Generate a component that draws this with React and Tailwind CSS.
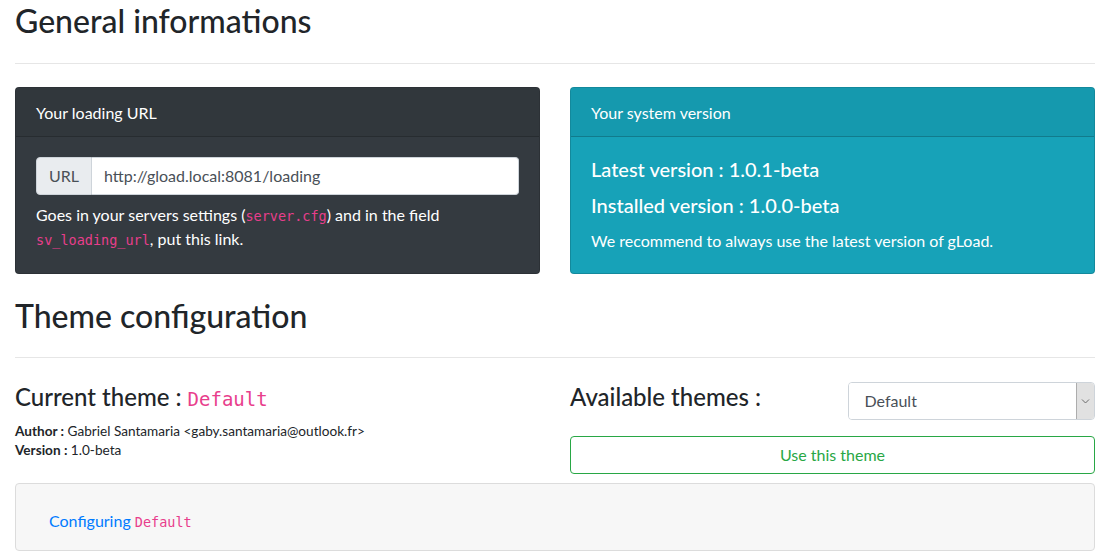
import React from 'react';

const code = "font-['DejaVu_Sans_Mono',monospace] text-[13.5px] text-[#e83e8c]";

const App = () => {
  return (
    <div className="w-[1110px] px-[15px] bg-white text-[#212529] font-['Lato',sans-serif] text-base leading-normal flex flex-col">
      {/* General informations */}
      <h2 className="text-[32px] leading-[38px] mt-[2px] font-medium">General informations</h2>
      <hr className="mt-[23px] border-t border-[#e6e6e6]" />

      <div className="grid grid-cols-2 gap-[30px] mt-[23px]">
        {/* Loading URL */}
        <div className="bg-[#343a40] text-white rounded border border-black/15 flex flex-col">
          <div className="px-5 pt-[13px] pb-[11px] bg-black/5 border-b border-black/20 rounded-t">Your loading URL</div>
          <div className="p-5">
            <div className="flex h-[38px] mb-2">
              <span className="flex items-center px-3 bg-[#e9ecef] text-[#495057] border border-[#ced4da] rounded-l">URL</span>
              <input
                type="text"
                readOnly
                value="http://gload.local:8081/loading"
                className="flex-1 px-3 bg-white text-[#495057] border border-l-0 border-[#ced4da] rounded-r outline-none"
              />
            </div>
            <p>
              Goes in your servers settings (<code className={code}>server.cfg</code>) and in the field{' '}
              <code className={code}>sv_loading_url</code>, put this link.
            </p>
          </div>
        </div>

        {/* System version */}
        <div className="bg-[#17a2b8] text-white rounded border border-black/15 flex flex-col">
          <div className="px-5 pt-[13px] pb-[11px] bg-black/5 border-b border-black/20 rounded-t">Your system version</div>
          <div className="p-5">
            <h5 className="text-xl leading-[1.2] mb-3 font-medium">Latest version : 1.0.1-beta</h5>
            <h5 className="text-xl leading-[1.2] mb-3 font-medium">Installed version : 1.0.0-beta</h5>
            <p>We recommend to always use the latest version of gLoad.</p>
          </div>
        </div>
      </div>

      {/* Theme configuration */}
      <h2 className="text-[32px] leading-[38px] mt-[23px] font-medium">Theme configuration</h2>
      <hr className="mt-[22px] border-t border-[#e6e6e6]" />

      <div className="grid grid-cols-2 gap-[30px] mt-[24px]">
        <div className="flex flex-col">
          <h4 className="text-2xl leading-[29px] mb-2 font-medium">
            Current theme : <code className="font-['DejaVu_Sans_Mono',monospace] text-[19px] text-[#e83e8c]">Default</code>
          </h4>
          <p className="text-[13.6px] leading-[19px]">
            <b>Author :</b> Gabriel Santamaria &lt;gaby.santamaria@outlook.fr&gt;
            <br />
            <b>Version :</b> 1.0-beta
          </p>
        </div>

        <div className="flex flex-col">
          <div className="grid grid-cols-2 gap-[30px] items-start">
            <h4 className="text-2xl leading-[29px] font-medium">Available themes :</h4>
            <div className="flex h-[38px] bg-white border border-[#ced4da] rounded overflow-hidden">
              <select className="flex-1 appearance-none bg-white pl-4 text-[#495057] outline-none">
                <option>Default</option>
              </select>
              <div className="w-[18px] bg-[#e1e1e1] border-l border-[#adadad] flex items-center justify-center">
                <svg width="9" height="6" viewBox="0 0 9 6" fill="none" stroke="#6b6b6b" strokeWidth="1">
                  <path d="M1 1.5l3.5 3.5 3.5-3.5" />
                </svg>
              </div>
            </div>
          </div>
          <button className="mt-4 w-full h-[38px] border border-[#28a745] text-[#28a745] rounded bg-white">
            Use this theme
          </button>
        </div>
      </div>

      {/* Theme settings box */}
      <div className="mt-[9px] bg-[#f7f7f7] border border-[#dcdcdc] rounded pl-[33px] pt-[25px] pb-[17px]">
        <span className="text-[#007bff]">Configuring</span>{' '}
        <code className={code}>Default</code>
      </div>
    </div>
  );
};

export default App;
